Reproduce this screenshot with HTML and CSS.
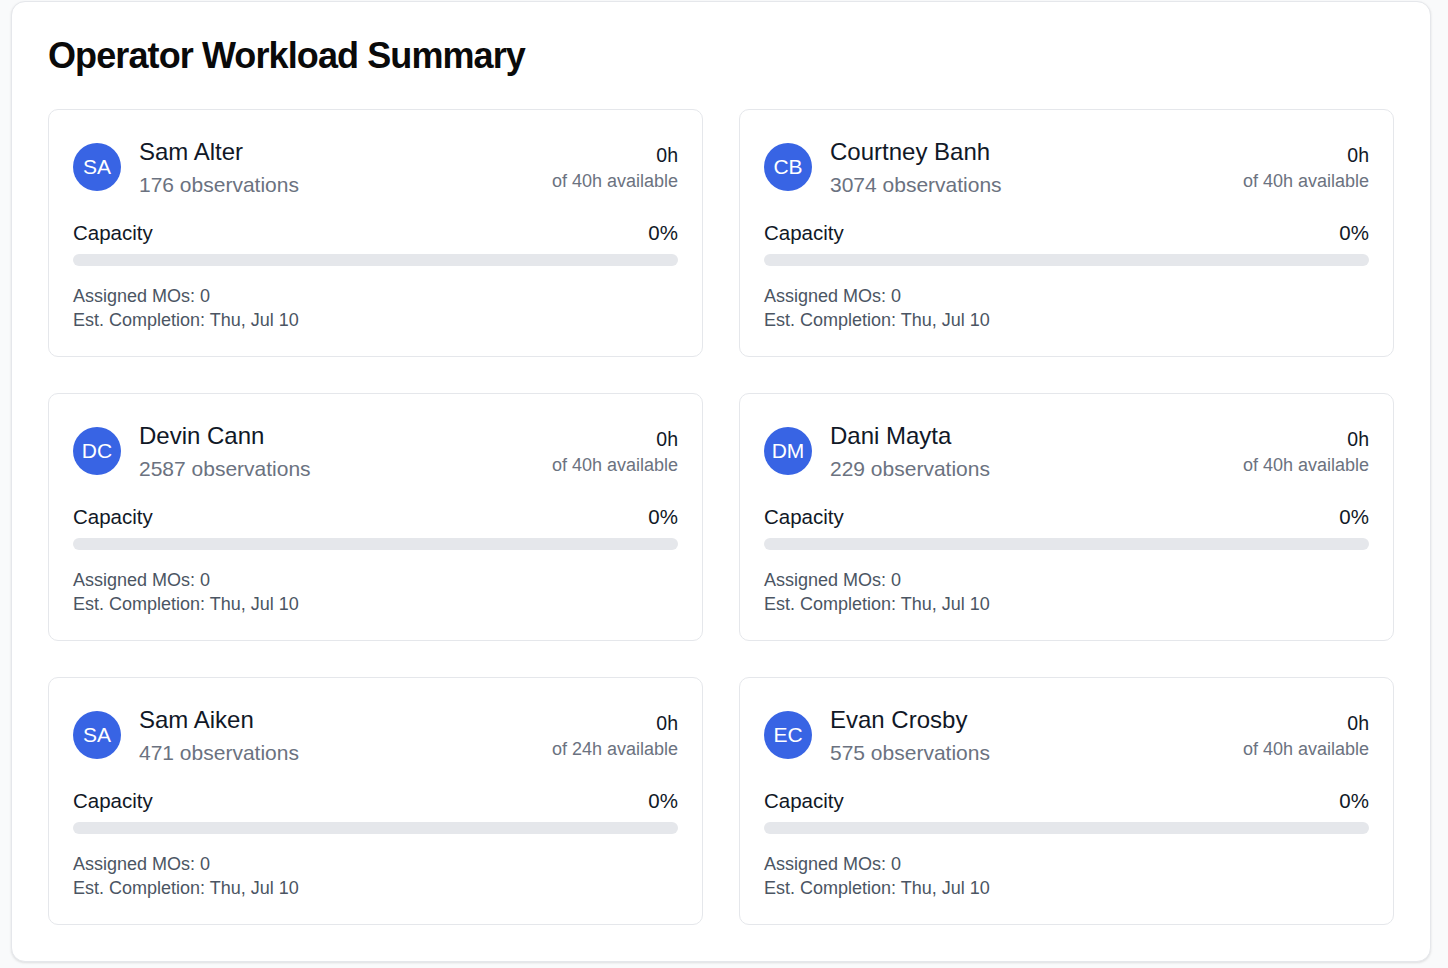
FILE: index.html
```html
<!DOCTYPE html>
<html lang="en">
<head>
<meta charset="utf-8">
<title>Operator Workload Summary</title>
<link rel="stylesheet" href="styles.css">
</head>
<body>
<div class="page">
  <section class="panel">
    <h1 class="title">Operator Workload Summary</h1>
    <div class="grid">
      <div class="card">
        <div class="head">
          <div class="who">
            <div class="avatar">SA</div>
            <div class="names">
              <div class="name">Sam Alter</div>
              <div class="obs">176 observations</div>
            </div>
          </div>
          <div class="hours">
            <div class="hrs">0h</div>
            <div class="avail">of 40h available</div>
          </div>
        </div>
        <div class="cap-row"><span>Capacity</span><span>0%</span></div>
        <div class="bar"><div class="fill" style="width:0%"></div></div>
        <div class="meta">
          <div>Assigned MOs: 0</div>
          <div>Est. Completion: Thu, Jul 10</div>
        </div>
      </div>
      <div class="card">
        <div class="head">
          <div class="who">
            <div class="avatar">CB</div>
            <div class="names">
              <div class="name">Courtney Banh</div>
              <div class="obs">3074 observations</div>
            </div>
          </div>
          <div class="hours">
            <div class="hrs">0h</div>
            <div class="avail">of 40h available</div>
          </div>
        </div>
        <div class="cap-row"><span>Capacity</span><span>0%</span></div>
        <div class="bar"><div class="fill" style="width:0%"></div></div>
        <div class="meta">
          <div>Assigned MOs: 0</div>
          <div>Est. Completion: Thu, Jul 10</div>
        </div>
      </div>
      <div class="card">
        <div class="head">
          <div class="who">
            <div class="avatar">DC</div>
            <div class="names">
              <div class="name">Devin Cann</div>
              <div class="obs">2587 observations</div>
            </div>
          </div>
          <div class="hours">
            <div class="hrs">0h</div>
            <div class="avail">of 40h available</div>
          </div>
        </div>
        <div class="cap-row"><span>Capacity</span><span>0%</span></div>
        <div class="bar"><div class="fill" style="width:0%"></div></div>
        <div class="meta">
          <div>Assigned MOs: 0</div>
          <div>Est. Completion: Thu, Jul 10</div>
        </div>
      </div>
      <div class="card">
        <div class="head">
          <div class="who">
            <div class="avatar">DM</div>
            <div class="names">
              <div class="name">Dani Mayta</div>
              <div class="obs">229 observations</div>
            </div>
          </div>
          <div class="hours">
            <div class="hrs">0h</div>
            <div class="avail">of 40h available</div>
          </div>
        </div>
        <div class="cap-row"><span>Capacity</span><span>0%</span></div>
        <div class="bar"><div class="fill" style="width:0%"></div></div>
        <div class="meta">
          <div>Assigned MOs: 0</div>
          <div>Est. Completion: Thu, Jul 10</div>
        </div>
      </div>
      <div class="card">
        <div class="head">
          <div class="who">
            <div class="avatar">SA</div>
            <div class="names">
              <div class="name">Sam Aiken</div>
              <div class="obs">471 observations</div>
            </div>
          </div>
          <div class="hours">
            <div class="hrs">0h</div>
            <div class="avail">of 24h available</div>
          </div>
        </div>
        <div class="cap-row"><span>Capacity</span><span>0%</span></div>
        <div class="bar"><div class="fill" style="width:0%"></div></div>
        <div class="meta">
          <div>Assigned MOs: 0</div>
          <div>Est. Completion: Thu, Jul 10</div>
        </div>
      </div>
      <div class="card">
        <div class="head">
          <div class="who">
            <div class="avatar">EC</div>
            <div class="names">
              <div class="name">Evan Crosby</div>
              <div class="obs">575 observations</div>
            </div>
          </div>
          <div class="hours">
            <div class="hrs">0h</div>
            <div class="avail">of 40h available</div>
          </div>
        </div>
        <div class="cap-row"><span>Capacity</span><span>0%</span></div>
        <div class="bar"><div class="fill" style="width:0%"></div></div>
        <div class="meta">
          <div>Assigned MOs: 0</div>
          <div>Est. Completion: Thu, Jul 10</div>
        </div>
      </div>
    </div>
  </section>
</div>
</body>
</html>
```
FILE: styles.css
```css
* { box-sizing: border-box; }
html, body { margin: 0; padding: 0; }
body {
  background: #f9fafb;
  font-family: "Liberation Sans", Arial, Helvetica, sans-serif;
  color: #111827;
}
.page {
  padding: 1px 17px 6px 11px;
}
.panel {
  background: #ffffff;
  border: 1px solid #e5e7eb;
  border-radius: 14px;
  box-shadow: 0 1px 3px rgba(0,0,0,0.08), 0 1px 2px rgba(0,0,0,0.04);
  padding: 36px;
}
.title {
  margin: 0 0 35px 0;
  font-size: 36px;
  line-height: 36px;
  font-weight: 700;
  letter-spacing: -0.9px;
  color: #0a0a0a;
}
.grid {
  display: grid;
  grid-template-columns: 1fr 1fr;
  gap: 36px;
}
.card {
  border: 1px solid #e5e7eb;
  border-radius: 10px;
  padding: 24px;
  background: #fff;
}
.head {
  display: flex;
  justify-content: space-between;
  align-items: center;
}
.who {
  display: flex;
  align-items: center;
  gap: 18px;
}
.avatar {
  width: 48px;
  height: 48px;
  border-radius: 50%;
  background: #3864e4;
  color: #fff;
  display: flex;
  align-items: center;
  justify-content: center;
  font-size: 21px;
}
.name {
  font-size: 24px;
  line-height: 36px;
  color: #111827;
}
.obs {
  font-size: 21px;
  line-height: 30px;
  color: #6b7280;
}
.hours {
  text-align: right;
}
.hrs {
  font-size: 19.5px;
  line-height: 28px;
  color: #111827;
}
.avail {
  font-size: 18px;
  line-height: 24px;
  color: #6b7280;
}
.cap-row {
  margin-top: 18px;
  display: flex;
  justify-content: space-between;
  font-size: 20.5px;
  line-height: 30px;
  color: #111827;
}
.bar {
  margin-top: 6px;
  height: 12px;
  border-radius: 6px;
  background: #e5e7eb;
  overflow: hidden;
}
.fill {
  height: 100%;
  background: #3864e4;
}
.meta {
  margin-top: 18px;
  font-size: 18px;
  line-height: 24px;
  color: #4b5563;
}
```
